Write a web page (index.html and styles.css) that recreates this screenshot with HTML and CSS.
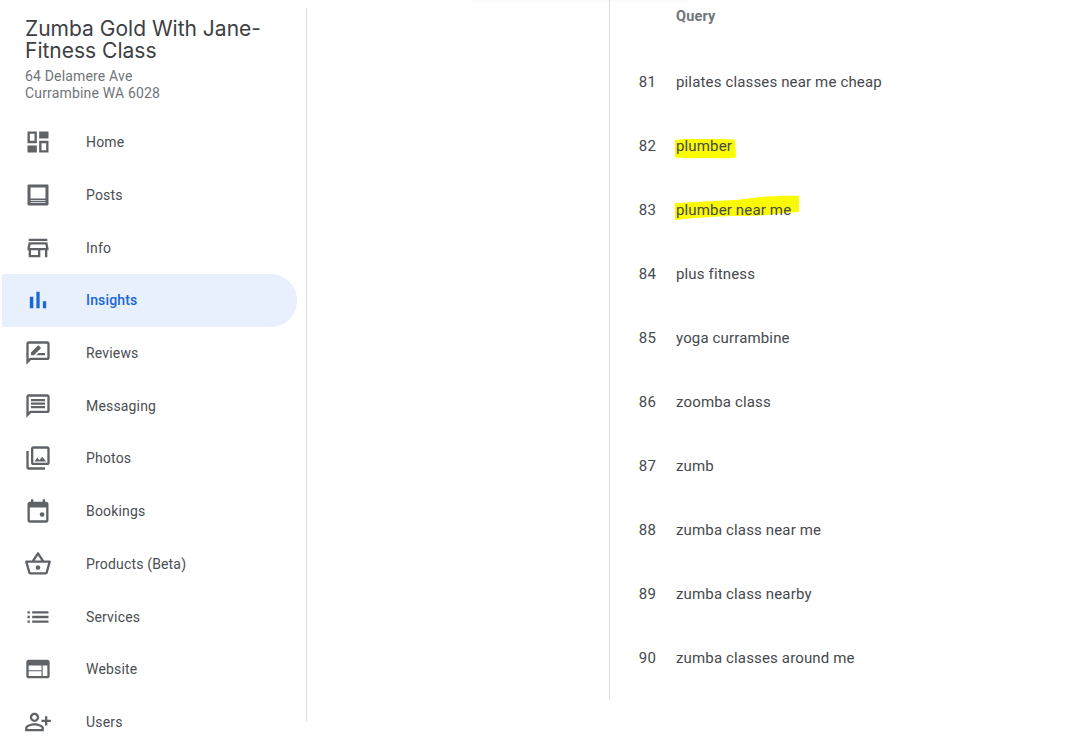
FILE: index.html
```html
<!DOCTYPE html>
<html lang="en">
<head>
<meta charset="utf-8">
<title>Insights</title>
<link rel="stylesheet" href="styles.css">
</head>
<body>
<div class="page">
  <div class="top-fade"></div>
  <aside class="sidebar">
    <header class="biz">
      <h1 class="biz-name">Zumba Gold With Jane- Fitness Class</h1>
      <p class="biz-address">64 Delamere Ave<br>Currambine WA 6028</p>
    </header>
    <nav class="nav">
      <a class="nav-item"><svg class="icon" viewBox="0 0 24 24"><path fill-rule="evenodd" d="M3 3h8v10H3zM5 5v6h4V5zM13 3h8v6h-8zM3 15h8v6H3zM13 11h8v10h-8zM15 13v6h4v-6z"/></svg><span>Home</span></a>
      <a class="nav-item"><svg class="icon" viewBox="0 0 24 24"><path fill-rule="evenodd" d="M4 3h16c.6 0 1 .4 1 1v16c0 .6-.4 1-1 1H4c-.6 0-1-.4-1-1V4c0-.6.4-1 1-1zM5.600 5.600v9.400h12.800V5.600zM5.600 16.300v.7h12.800v-.7zM5.600 18v.7h12.800V18z"/></svg><span>Posts</span></a>
      <a class="nav-item"><svg class="icon" viewBox="0 0 24 24"><path d="M18.360 9l.6 3H5.040l.6-3h12.720M20 4H4v2h16V4zm0 3H4l-1 5v2h1v6h10v-6h4v6h2v-6h1v-2l-1-5zM6 18v-4h6v4H6z"/></svg><span>Info</span></a>
      <a class="nav-item is-active"><svg class="icon" viewBox="0 0 24 24"><path d="M5 9.200h3V19H5zM10.600 5h2.800v14h-2.800zm5.600 8H19v6h-2.800z"/></svg><span>Insights</span></a>
      <a class="nav-item"><svg class="icon" viewBox="0 0 24 24"><path d="M20 2H4c-1.100 0-1.990.9-1.990 2L2 22l4-4h14c1.100 0 2-.9 2-2V4c0-1.100-.9-2-2-2zm0 14H5.170L4 17.170V4h16v12zm-9.500-2H18v-2h-5.500zm3.860-5.870c.2-.2.2-.51 0-.71l-1.770-1.770c-.2-.2-.51-.2-.71 0L6 11.530V14h2.470l5.890-5.870z"/></svg><span>Reviews</span></a>
      <a class="nav-item"><svg class="icon" viewBox="0 0 24 24"><path d="M20 2H4c-1.100 0-1.990.9-1.990 2L2 22l4-4h14c1.100 0 2-.9 2-2V4c0-1.100-.9-2-2-2zm0 14H5.170L4 17.170V4h16v12zM6 12h12v2H6zm0-3h12v2H6zm0-3h12v2H6z"/></svg><span>Messaging</span></a>
      <a class="nav-item"><svg class="icon" viewBox="0 0 24 24"><path d="M20 4v12H8V4h12m0-2H8c-1.100 0-2 .9-2 2v12c0 1.100.9 2 2 2h12c1.100 0 2-.9 2-2V4c0-1.100-.9-2-2-2zm-8.500 9.670l1.690 2.260 2.480-3.100L19 15H9zM2 6v14c0 1.100.9 2 2 2h14v-2H4V6H2z"/></svg><span>Photos</span></a>
      <a class="nav-item"><svg class="icon" viewBox="0 0 24 24"><path d="M19 4h-1V2h-2v2H8V2H6v2H5c-1.100 0-2 .9-2 2v14c0 1.100.9 2 2 2h14c1.100 0 2-.9 2-2V6c0-1.100-.9-2-2-2zm0 16H5V9h14v11z"/><circle cx="15.500" cy="15" r="2"/></svg><span>Bookings</span></a>
      <a class="nav-item"><svg class="icon" viewBox="0 0 24 24"><path d="M22 9h-4.790l-4.380-6.560c-.19-.28-.51-.42-.83-.42s-.64.14-.83.43L6.790 9H2c-.55 0-1 .45-1 1 0 .09.01.18.04.27l2.540 9.270c.23.84 1 1.460 1.920 1.460h13c.92 0 1.690-.62 1.930-1.460l2.540-9.270L23 10c0-.55-.45-1-1-1zM12 4.800L14.800 9H9.200L12 4.800zM18.500 19l-12.990.01L3.310 11H20.700l-2.200 8zM12 13c-1.100 0-2 .9-2 2s.9 2 2 2 2-.9 2-2-.9-2-2-2z"/></svg><span>Products (Beta)</span></a>
      <a class="nav-item"><svg class="icon" viewBox="0 0 24 24"><path d="M3 13h2v-2H3v2zm0 4h2v-2H3v2zm0-8h2V7H3v2zm4 4h14v-2H7v2zm0 4h14v-2H7v2zM7 7v2h14V7H7z"/></svg><span>Services</span></a>
      <a class="nav-item"><svg class="icon" viewBox="0 0 24 24"><path d="M20 4H4c-1.100 0-2 .9-2 2v12c0 1.100.9 2 2 2h16c1.100 0 2-.9 2-2V6c0-1.100-.9-2-2-2zM15 18H4v-4h11v4zm0-5H4V9h11v4zm5 5h-4V9h4v9z"/></svg><span>Website</span></a>
      <a class="nav-item"><svg class="icon icon-flip" viewBox="0 0 24 24"><path d="M15 6c1.100 0 2 .9 2 2s-.9 2-2 2-2-.9-2-2 .9-2 2-2m0 9c2.700 0 5.800 1.290 6 2v1H9v-.99c.2-.72 3.300-2.010 6-2.010m0-11c-2.210 0-4 1.790-4 4s1.790 4 4 4 4-1.790 4-4-1.790-4-4-4zm0 9c-2.670 0-8 1.340-8 4v3h16v-3c0-2.660-5.330-4-8-4zM6 10V7H4v3H1v2h3v3h2v-3h3v-2H6z"/></svg><span>Users</span></a>
    </nav>
  </aside>
  <div class="spacer"></div>
  <main class="results">
    <div class="results-head"><span class="num"></span><span class="query">Query</span></div>
    <div class="row"><span class="num">81</span><span class="query">pilates classes near me cheap</span></div>
    <div class="row">
      <svg class="marker marker-short" viewBox="674 136 64 24" aria-hidden="true"><path d="M675 140c8-1.500 14-1 22-1 10 0 24-.5 38 .5l1 18c-12 1.500-20 .5-30 .5-10 0-22 .5-31-.5z"/></svg>
      <span class="num">82</span><span class="query">plumber</span>
    </div>
    <div class="row">
      <svg class="marker marker-long" viewBox="672 192 130 32" aria-hidden="true"><path d="M675 203c20-1 40-2 58-3 14-1 24-3 34-3.500 12-.5 22-1 32-.5v16c-12 .5-22 2-32 3-14 1-24 1-34 1-20 .5-40 2-58 4z"/></svg>
      <span class="num">83</span><span class="query">plumber near me</span>
    </div>
    <div class="row"><span class="num">84</span><span class="query">plus fitness</span></div>
    <div class="row"><span class="num">85</span><span class="query">yoga currambine</span></div>
    <div class="row"><span class="num">86</span><span class="query">zoomba class</span></div>
    <div class="row"><span class="num">87</span><span class="query">zumb</span></div>
    <div class="row"><span class="num">88</span><span class="query">zumba class near me</span></div>
    <div class="row"><span class="num">89</span><span class="query">zumba class nearby</span></div>
    <div class="row"><span class="num">90</span><span class="query">zumba classes around me</span></div>
  </main>
</div>
</body>
</html>
```

FILE: styles.css
```css
* { box-sizing: border-box; }
html, body { margin: 0; height: 100%; background: #fff; overflow: hidden; }
body { font-family: Roboto, "Liberation Sans", sans-serif; font-size: 14px; color: #3c4043; letter-spacing: 0.17px; }

.page { position: relative; display: flex; align-items: flex-start; height: 750px; }
.top-fade { position: absolute; left: 470px; top: 0; width: 220px; height: 2px; background: #fbfbfb; }

.sidebar { flex: 0 0 307px; height: 713px; margin-top: 8px; border-right: 1px solid #dadce0; }
.biz { padding: 10px 30px 0 25px; }
.biz-name { margin: 0; font-family: Inter, Roboto, sans-serif; font-size: 21px; font-weight: 400; line-height: 22px; letter-spacing: 0; color: #3c4043; }
.biz-address { margin: 6px 0 0; line-height: 17px; color: #70757a; }

.nav { margin-top: 13.800px; }
.nav-item { display: flex; align-items: center; gap: 34.500px; height: 52.730px; width: 295px; margin-left: 2px; padding-left: 21.500px; border-radius: 0 26px 26px 0; color: #4a4e52; }
.nav-item.is-active { background: #e8f0fe; color: #1967d2; font-weight: 500; }
.icon { flex: none; width: 28px; height: 28px; fill: #5f6368; }
.is-active .icon { fill: #1967d2; }
.icon-flip { transform: scaleX(-1); }

.spacer { flex: 0 0 302px; }

.results { position: relative; flex: 0 0 auto; width: 400px; height: 700px; border-left: 1px solid #dadce0; font-size: 15px; letter-spacing: 0.15px; color: #45494d; }
.results-head { display: flex; gap: 20px; height: 50px; padding-top: 8px; line-height: 18px; align-items: flex-start; font-size: 14.500px; font-weight: 700; color: #70757a; }
.row { position: relative; display: flex; gap: 20px; align-items: center; height: 64px; }
.num { flex: 0 0 46px; text-align: right; }
.query { position: relative; z-index: 1; }
.marker { position: absolute; fill: #fbfb00; }
.marker-short { left: 64px; top: 22px; width: 64px; height: 24px; }
.marker-long { left: 62px; top: 14px; width: 130px; height: 32px; }
```
